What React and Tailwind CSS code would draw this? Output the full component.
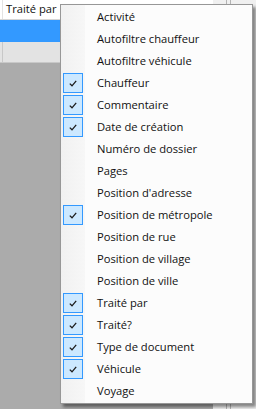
const columns = [
  { label: "Activité", checked: false },
  { label: "Autofiltre chauffeur", checked: false },
  { label: "Autofiltre véhicule", checked: false },
  { label: "Chauffeur", checked: true },
  { label: "Commentaire", checked: true },
  { label: "Date de création", checked: true },
  { label: "Numéro de dossier", checked: false },
  { label: "Pages", checked: false },
  { label: "Position d'adresse", checked: false },
  { label: "Position de métropole", checked: true },
  { label: "Position de rue", checked: false },
  { label: "Position de village", checked: false },
  { label: "Position de ville", checked: false },
  { label: "Traité par", checked: true },
  { label: "Traité?", checked: true },
  { label: "Type de document", checked: true },
  { label: "Véhicule", checked: true },
  { label: "Voyage", checked: false },
];

function CheckMark() {
  return (
    <svg width="8" height="7" viewBox="0 0 8 7" fill="none" stroke="#1a1a1a" strokeWidth="1.3">
      <path d="M0.8 3.6 L3 5.8 L7.2 0.8" />
    </svg>
  );
}

function ColumnMenu() {
  return (
    <div className="absolute left-[60px] top-[4px] w-[193px] border border-[#979797] bg-[#fcfcfc] py-px shadow-[3px_3px_3px_rgba(0,0,0,0.45)]">
      <div className="absolute bottom-0 left-0 top-0 w-[24px] bg-gradient-to-r from-[#f1f1f1] to-[#f7f7f7]" />
      {columns.map((col) => (
        <div key={col.label} className="relative flex h-[22px] items-center">
          <div className="ml-[2px] flex h-[20px] w-[20px] items-center justify-center">
            {col.checked && (
              <div className="flex h-[20px] w-[20px] items-center justify-center border border-[#3399ff] bg-[#cce8ff]">
                <CheckMark />
              </div>
            )}
          </div>
          <span className="ml-[14px] text-[11.2px] text-[#111]">{col.label}</span>
        </div>
      ))}
    </div>
  );
}

export default function App() {
  return (
    <div className="relative h-[409px] w-[256px] overflow-hidden font-['Open_Sans',sans-serif]">
      <div className="flex h-full">
        <div className="flex w-[213px] flex-col bg-[#ababab]">
          <div className="flex h-[20px] items-center border-b border-[#d5d5d5] bg-white">
            <div className="h-full w-[3px] border-r border-[#e3e3e3]" />
            <span className="ml-[3px] text-[11.2px] text-[#111]">Traité par</span>
          </div>
          <div className="h-[22px] bg-[#3399ff]" />
          <div className="flex h-[21px] border-b border-[#c8c8c8] bg-[#e3e3e3]">
            <div className="h-full w-[3px] border-r border-[#c8c8c8]" />
          </div>
        </div>
        <div className="flex flex-1 bg-[#f0f0f0]">
          <div className="w-[14px] border-r border-[#b4b4b4]" />
          <div className="w-[4px] border-r border-[#b4b4b4]" />
        </div>
      </div>
      <ColumnMenu />
    </div>
  );
}
